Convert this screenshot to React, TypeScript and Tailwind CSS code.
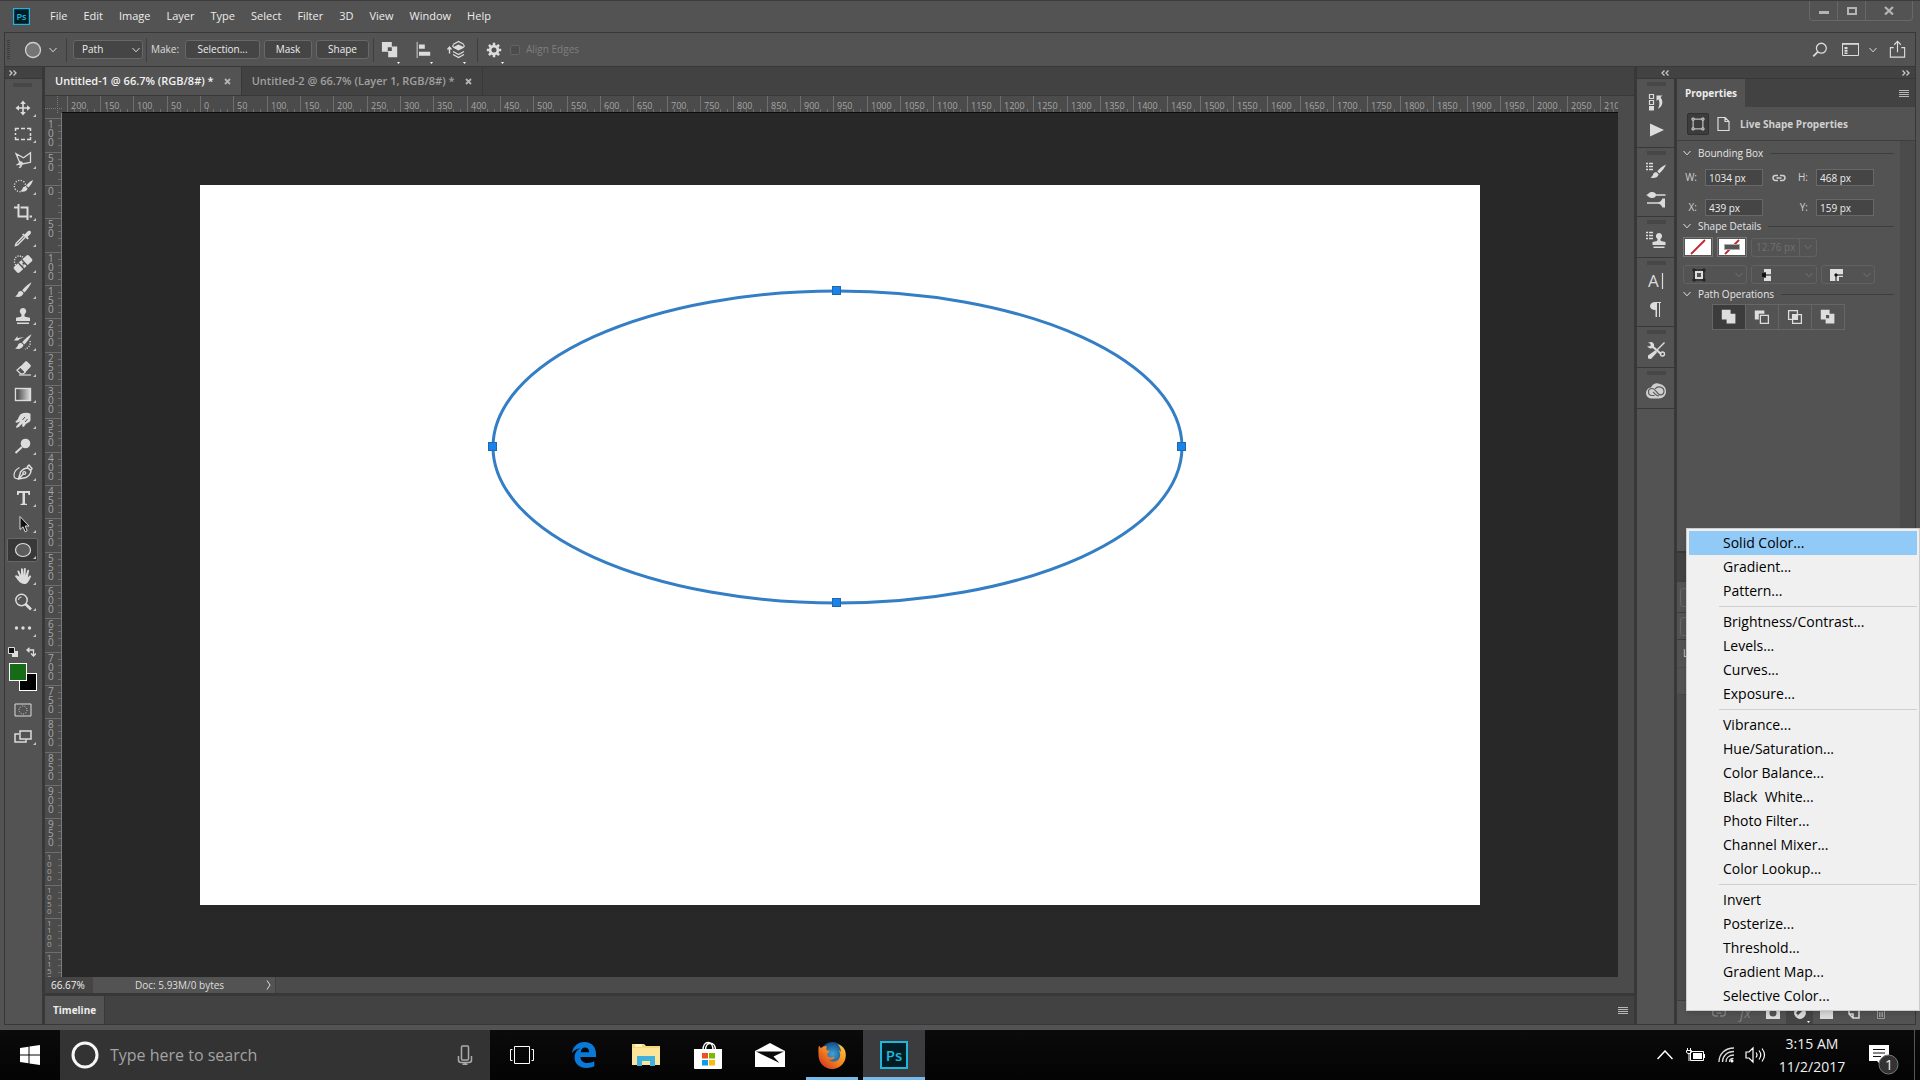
import React from 'react';
import { clsx } from 'clsx';

const menus = ['File', 'Edit', 'Image', 'Layer', 'Type', 'Select', 'Filter', '3D', 'View', 'Window', 'Help'];

const adjustmentGroups = [
  ['Solid Color...', 'Gradient...', 'Pattern...'],
  ['Brightness/Contrast...', 'Levels...', 'Curves...', 'Exposure...'],
  ['Vibrance...', 'Hue/Saturation...', 'Color Balance...', 'Black  White...', 'Photo Filter...', 'Channel Mixer...', 'Color Lookup...'],
  ['Invert', 'Posterize...', 'Threshold...', 'Gradient Map...', 'Selective Color...'],
];

const RULER_STEP = 100 / 3; // 50 document pixels at 66.7%

interface IconProps {
  children: React.ReactNode;
  size?: number;
  className?: string;
}

function Icon({ children, size = 20, className }: IconProps) {
  return (
    <svg
      width={size}
      height={size}
      viewBox="0 0 20 20"
      fill="none"
      stroke="currentColor"
      strokeWidth="1.4"
      aria-hidden="true"
      className={clsx('shrink-0', className)}
    >
      {children}
    </svg>
  );
}

const Solid = ({ d }: { d: string }) => <path d={d} fill="currentColor" fillRule="evenodd" stroke="none" />;

function Chevron({ className }: { className?: string }) {
  return (
    <svg width="8" height="6" viewBox="0 0 8 6" fill="none" stroke="currentColor" aria-hidden="true" className={clsx('shrink-0', className)}>
      <path d="M.5 1 4 4.8 7.5 1" />
    </svg>
  );
}

function DoubleArrow({ left = false }: { left?: boolean }) {
  return (
    <svg width="8" height="6" viewBox="0 0 8 6" fill="none" stroke="#c8c8c8" strokeWidth="1.3" aria-hidden="true">
      {left ? <path d="M3.5.5 1 3l2.5 2.5M7.5.5 5 3l2.5 2.5" /> : <path d="M.5.5 3 3 .5 5.5M4.500.5 7 3 4.500 5.500" />}
    </svg>
  );
}

function Grip() {
  return (
    <svg width="19" height="4" aria-hidden="true" className="shrink-0">
      <path d="M.5 2h19" stroke="#3c3c3c" strokeWidth="4" strokeDasharray="1 1" />
    </svg>
  );
}

function PanelMenuIcon() {
  return (
    <svg width="10" height="7" aria-hidden="true">
      <path d="M0 .5h10M0 2.500h10M0 4.500h10M0 6.500h10" stroke="#b8b8b8" />
    </svg>
  );
}

function PsLogo({ size }: { size: number }) {
  return (
    <svg width={size} height={size} viewBox="0 0 28 28" aria-hidden="true">
      <rect x="1" y="1" width="26" height="26" fill="#001d26" stroke="#1fb5dc" strokeWidth="2" />
      <text x="14" y="19.500" textAnchor="middle" fontSize="15" fontWeight="600" fill="#1fb5dc" className="font-['Open_Sans',sans-serif]">
        Ps
      </text>
    </svg>
  );
}

const BrushShape = () => (
  <>
    <Solid d="M18.500 2.200c-3 1.400-7 5.200-9.300 8.100l2.200 2.100c2.700-2.700 6-7.100 7.100-10.200Z" />
    <Solid d="M8.400 11.100c-1.700-.3-3 .6-3.500 2.200-.4 1.400-1.300 2.300-2.900 3 2.600 1.300 7.300 1 8.600-3.200Z" />
  </>
);

const StampShape = () => <Solid d="M10 2a3.300 3.300 0 0 0-2 5.900c.8.700.8 2-.1 2.900L3 11.800v3.100h14v-3.100l-4.900-1c-.9-.9-.9-2.200-.1-2.900A3.300 3.300 0 0 0 10 2ZM4 16.500h12V18H4Z" />;

const tools: { name: string; icon: React.ReactNode; active?: boolean }[] = [
  {
    name: 'Move',
    icon: (
      <Icon>
        <path d="M10 4v12M4 10h12" strokeWidth="1.600" />
        <Solid d="m10 2.500 2.800 3.500H7.200ZM10 17.500 7.200 14h5.600ZM2.500 10 6 7.200v5.600ZM17.500 10 14 12.800V7.200Z" />
      </Icon>
    ),
  },
  { name: 'Marquee', icon: <Icon><path d="M2.500 7V4.500H6M8 4.500h4M14 4.500h3.500V7M17.500 9v3M17.500 13v2.500H14M12 15.500H8M6 15.500H2.500V13M2.500 11V9" strokeWidth="1.500" /></Icon> },
  {
    name: 'Polygonal Lasso',
    icon: <Icon><path d="M7 13 3 3.700l7.500 4 7-5v9.600L9 14M6.800 12.300c1.800-1 3.800 1.200 1.800 2.400-1.800.9-4-1-1.800-2.400Zm1.500 2.500c.2 1.500-.8 2.500-2.400 2.800M3.500 14.800l5-1.600" strokeWidth="1.300" /></Icon>,
  },
  {
    name: 'Quick Selection',
    icon: (
      <Icon>
        <circle cx="7" cy="10" r="5.700" strokeDasharray="1.200 1.500" />
        <Solid d="M20 4c-2.500 1-5 3.300-6.800 5.600l2 2C17.500 9.500 19.500 6.700 20 4ZM12.500 10.500c-1.700 0-2.600.8-3 2.200-.3 1-1 1.700-2.200 2.200 2.300 1.200 6.200.8 7.300-2.500Z" />
      </Icon>
    ),
  },
  { name: 'Crop', icon: <Icon><path d="M5.500 2v12.500H14M1 5.500h3.500M7.500 5.500h7V18M16.500 14.500H19" strokeWidth="2" /></Icon> },
  {
    name: 'Eyedropper',
    icon: (
      <Icon>
        <path d="m10.500 8-7 7c-.6.700-.7 1.500-1 2.500 1-.2 2-.4 2.500-1l7-7" />
        <Solid d="M9 6.600 10.200 5.400 11.700 6.500 14 4c2.700-3 5.500-.3 3 2.500l-2.500 2.300 1.300 1.400-1.300 1.300Z" />
      </Icon>
    ),
  },
  {
    name: 'Healing Brush',
    icon: (
      <Icon>
        <path d="M8 2.500C4.500.5 1 4 1.500 8c.1 1.300.7 2.300 1.500 3M9 2.500l2 2" strokeDasharray="1.200 1.300" />
        <rect x="0" y="6" width="20" height="8" rx="2" transform="rotate(-42 10 10)" fill="currentColor" stroke="none" />
        <path d="m5.500 9 6 6.500M8.800 5.800l6 6.500" stroke="#535353" />
        <path d="M9.500 9.500h.9v.9M12 10h-.5M9.500 12h.8" stroke="#444" />
      </Icon>
    ),
  },
  { name: 'Brush', icon: <Icon><BrushShape /></Icon> },
  { name: 'Clone Stamp', icon: <Icon><StampShape /></Icon> },
  {
    name: 'History Brush',
    icon: (
      <Icon>
        <BrushShape />
        <Solid d="M1 8.500 4.500 4v2.200c2-.8 4.500-1 6.500-.2C8.500 6 6.500 6.600 5.200 8.500Z" />
        <path d="M17 9c1 3-1 7-5 8" strokeDasharray="1.200 1.300" />
      </Icon>
    ),
  },
  {
    name: 'Eraser',
    icon: (
      <Icon>
        <path d="m4 12.200 3.800 3.700h2.500l2-2L7.500 9Z" strokeWidth="1.300" />
        <Solid d="m7 9 5.500-5.700h1.300l4 4-.2 1.400-5.400 5.700Z" />
        <path d="M6 17h12" strokeWidth="1.200" />
      </Icon>
    ),
  },
  {
    name: 'Gradient',
    icon: (
      <Icon>
        <defs>
          <linearGradient id="toolGradient"><stop offset="0" stopColor="#3a3a3a" /><stop offset="1" stopColor="#e0e0e0" /></linearGradient>
        </defs>
        <rect x="2.500" y="4.500" width="15" height="12" fill="url(#toolGradient)" />
      </Icon>
    ),
  },
  {
    name: 'Smudge',
    icon: (
      <Icon>
        <Solid d="M8 4c3-1.500 7-1.700 9.500-.2v6.700c-1 2.200-2.800 2.300-4 3-1.500.9-1.800 3.500-3.400 3.400-1.300-.2-1-2-.6-3.300-1.700 1-2.600 3.200-4.800 4-1.600.5-2.100-.7-1.200-1.700 1.600-1.600 2.600-2.900 3.700-4.600-1.500.7-3 1.800-4.200 1.300-1-.6-.4-1.600.6-2.100C5.800 9.300 5.500 5.500 8 4Z" />
        <path d="m9.500 10 2.500-3M12 12l2.500-3" stroke="#535353" strokeWidth="1" />
      </Icon>
    ),
  },
  { name: 'Dodge', icon: <Icon><circle cx="12.500" cy="7.500" r="4.800" fill="currentColor" stroke="none" /><path d="m9 11-6.500 6" strokeWidth="2" /></Icon> },
  {
    name: 'Pen',
    icon: (
      <Icon>
        <path d="m5.500 17 2-7c2-2.500 4.500-4 7.500-4l3 3c-.5 3-2.500 5.300-5 6.500Zm0 0 5-5.200M14 5l2-2 3 3.500-1.500 2" strokeWidth="1.500" />
        <circle cx="11.300" cy="11" r="1.400" />
        <path d="M6.500 5.500C3.500 7 1 10 1 13.500c0 2 1.500 3.500 4 3" strokeWidth="1.200" />
      </Icon>
    ),
  },
  { name: 'Type', icon: <Icon><Solid d="M4 3h13v4h-1.500L15 5h-3v10.500l2 .5v1H7.500v-1l2-.5V5H6.200l-.7 2H4Z" /></Icon> },
  { name: 'Path Selection', icon: <Icon><path d="M7 2.500v13l3-2.700 2.200 5 2-1-2-4.800H16Z" fill="#111" strokeWidth="1" /></Icon> },
  { name: 'Ellipse', active: true, icon: <Icon><ellipse cx="10" cy="10" rx="7.500" ry="6.500" fill="#5c5c5c" strokeWidth="1.200" /></Icon> },
  { name: 'Hand', icon: <Icon><Solid d="M6.300 10.500 4.500 5.700c-.3-1.300 1.200-1.800 1.700-.6L8 9V3.200c0-1.400 1.800-1.400 1.900 0L10.200 9l.7-6.200c.2-1.300 1.900-1.100 1.900.2L12.600 9.400l1.700-5c.5-1.200 2-.7 1.700.5l-1.200 6.600 1.600-1.700c.9-.9 2.200 0 1.500 1.100-2 3.600-3 7.100-6.500 7.100-4.500 0-6.200-3.600-9.100-7.200-.8-1.200.6-2.200 1.700-1.300Z" /></Icon> },
  { name: 'Zoom', icon: <Icon><circle cx="8.500" cy="8" r="5.700" strokeWidth="1.500" /><path d="m12.500 12 5.500 5.500" strokeWidth="2.600" /><path d="M5.500 8a3 3 0 0 1 3-3" strokeWidth="1" /></Icon> },
  { name: 'Edit Toolbar', icon: <Icon><circle cx="3.500" cy="10" r="1.700" fill="currentColor" stroke="none" /><circle cx="10" cy="10" r="1.700" fill="currentColor" stroke="none" /><circle cx="16.500" cy="10" r="1.700" fill="currentColor" stroke="none" /></Icon> },
];

function CornerMark() {
  return (
    <svg width="3" height="3" aria-hidden="true" className="absolute right-1 bottom-1">
      <path d="M3 0v3H0Z" fill="#c4c4c4" />
    </svg>
  );
}

function Toolbox() {
  return (
    <div className="flex w-[37px] shrink-0 flex-col">
      <div className="mb-px flex h-[11px] items-center bg-[#424242] px-1">
        <DoubleArrow />
      </div>
      <div className="flex flex-1 flex-col items-center bg-[#535353] pt-1 pr-[2px] text-[#dcdcdc]">
        <Grip />
        <div className="mt-2 flex w-full flex-col">
          {tools.map((tool) => (
            <button key={tool.name} aria-label={tool.name} className="relative flex h-[26px] w-full items-center justify-center">
              <span className={clsx('flex h-6 w-[31px] items-center justify-center rounded-xs', tool.active && 'border border-[#666] bg-[#383838]')}>
                {tool.icon}
              </span>
              <CornerMark />
            </button>
          ))}
        </div>
        <div className="mt-[6px] flex w-full items-center justify-between pr-1 pl-[3px]">
          <svg width="10" height="10" aria-hidden="true">
            <path d="M4 4h6v6H4z" fill="#ddd" />
            <path d="M.5.5h6v6h-6z" fill="#111" stroke="#ddd" />
          </svg>
          <svg width="11" height="10" aria-hidden="true" fill="none" stroke="#ddd" strokeWidth="1.300">
            <path d="M2.500 3h6v5M4.500.7 2 3l2.500 2.300M6 6.500 8.500 9 11 6.500" />
          </svg>
        </div>
        <svg width="30" height="29" aria-label="Foreground and background colors" role="img" className="mt-[5px]">
          <rect x="11.500" y="11.500" width="17" height="17" fill="#000" stroke="#fff" />
          <rect x="1.500" y="1.500" width="17" height="17" fill="#176b17" stroke="#fff" />
        </svg>
        <button aria-label="Quick Mask" className="mt-[6px] flex h-[26px] items-center justify-center">
          <svg width="18" height="14" fill="none" stroke="#dcdcdc" aria-hidden="true">
            <path d="M1 1h16v12H1z" />
            <circle cx="9" cy="7" r="4" strokeDasharray="1 1.500" />
          </svg>
        </button>
        <button aria-label="Screen Mode" className="relative flex h-[26px] w-full items-center justify-center">
          <svg width="18" height="13" fill="none" stroke="#dcdcdc" aria-hidden="true">
            <path d="M5 4H1v8h11V9.500" strokeWidth="1.500" />
            <path d="M6 1h11v8H6z" strokeWidth="1.500" />
          </svg>
          <CornerMark />
        </button>
      </div>
    </div>
  );
}

function TitleBar() {
  return (
    <header className="flex h-8 shrink-0 items-center border-t border-[#3c3c3c] bg-[#535353] pl-[13px]">
      <PsLogo size={17} />
      <nav className="ml-3 flex h-full items-center text-[11px] text-[#ececec]">
        {menus.map((name) => (
          <button key={name} className="h-full px-2">{name}</button>
        ))}
      </nav>
      <div className="mr-[7px] ml-auto flex h-5 self-start rounded-b border border-t-0 border-[#686868] text-[#b4b4b4]">
        <button aria-label="Minimize" className="flex w-7 items-center justify-center border-r border-[#686868] pt-1">
          <svg width="10" height="3" aria-hidden="true"><path d="M0 0h10v3H0z" fill="currentColor" /></svg>
        </button>
        <button aria-label="Restore" className="flex w-7 items-center justify-center border-r border-[#686868]">
          <svg width="10" height="8" aria-hidden="true"><path d="M1 1h8v6H1z" fill="none" stroke="currentColor" strokeWidth="2" /></svg>
        </button>
        <button aria-label="Close" className="flex w-[46px] items-center justify-center">
          <svg width="10" height="9" aria-hidden="true"><path d="m1 1 8 7.500M9 1 1 8.500" stroke="currentColor" strokeWidth="2.200" /></svg>
        </button>
      </div>
    </header>
  );
}

function DropMark() {
  return <Chevron className="pointer-events-none absolute right-[3px] bottom-[6px]" />;
}

function ToolIconButton({ label, children }: { label: string; children: React.ReactNode }) {
  return (
    <button aria-label={label} className="relative flex h-7 w-[33px] items-center justify-center">
      {children}
      <svg width="3" height="2" aria-hidden="true" className="absolute right-[6px] bottom-0"><path d="M0 0h3L1.500 2Z" fill="#fff" /></svg>
    </button>
  );
}

function OptionsBar() {
  const optionButton = 'h-[19px] rounded-[3px] border border-[#686868] bg-[#454545] text-[#ededed]';
  return (
    <div className="flex h-[33px] shrink-0 items-center bg-[#535353] text-[10px] text-[#dcdcdc]">
      <svg width="3" height="19" aria-hidden="true" className="ml-[2px]"><path d="M1.500 0v19" stroke="#3c3c3c" strokeWidth="3" strokeDasharray="1 1" /></svg>
      <svg width="18" height="18" aria-hidden="true" className="ml-[14px]"><circle cx="9" cy="9" r="7.500" fill="#757575" stroke="#d0d0d0" strokeWidth="1.300" /></svg>
      <Chevron className="ml-[7px]" />
      <div className="ml-[9px] h-6 w-px bg-[#3e3e3e]" />
      <div className="relative ml-[6px]">
        <select aria-label="Tool mode" defaultValue="Path" className={clsx(optionButton, 'w-[70px] appearance-none pl-2')}>
          <option>Path</option>
        </select>
        <DropMark />
      </div>
      <div className="ml-[3px] h-6 w-px bg-[#3e3e3e]" />
      <span className="ml-1 w-[34px]">Make:</span>
      <button className={clsx(optionButton, 'w-[75px]')}>Selection...</button>
      <button className={clsx(optionButton, 'ml-1 w-12')}>Mask</button>
      <button className={clsx(optionButton, 'ml-1 w-[53px]')}>Shape</button>
      <div className="ml-1 h-6 w-px bg-[#3e3e3e]" />
      <div className="-ml-px flex">
        <ToolIconButton label="Path operations">
          <Icon size={18}><Solid d="M1 1h11v5h6v12H8v-6H1Zm6.500 6v4H12V7Z" /></Icon>
        </ToolIconButton>
        <ToolIconButton label="Path alignment">
          <Icon size={18}><path d="M3.500 1v18" strokeWidth="1" /><Solid d="M5.500 4H12v4.500H5.500ZM5.500 12H18v4.500H5.500Z" /></Icon>
        </ToolIconButton>
        <ToolIconButton label="Path arrangement">
          <Icon size={20}>
            <path d="M3.500 13.500V7.500M1.500 9.500l2-2.500 2 2.500" />
            <Solid d="m12.500 4.500 6 3-6 3-6-3Z" />
            <path d="m7 4.500 5.500-3 5.500 3M7 5v2M18 5v2M7 11.500l5.500 3 5.500-3M7 14.500l5.500 3 5.500-3" strokeWidth="1.300" />
          </Icon>
        </ToolIconButton>
      </div>
      <div className="ml-[5px] h-6 w-px bg-[#3e3e3e]" />
      <div className="-ml-px">
        <ToolIconButton label="Path options">
          <Icon size={18}>
            <circle cx="10" cy="10" r="4.300" strokeWidth="3" />
            <path d="M10 2v3M10 15v3M2 10h3M15 10h3M4.400 4.400l2 2M13.600 13.600l2 2M4.400 15.600l2-2M13.600 6.400l2-2" strokeWidth="2.800" />
          </Icon>
        </ToolIconButton>
      </div>
      <label className="flex items-center gap-[6px] text-[#7e7e7e]">
        <input type="checkbox" disabled className="size-[10px] appearance-none rounded-xs border border-[#646464] bg-[#4c4c4c]" />
        Align Edges
      </label>
      <div className="mr-2 ml-auto flex items-center">
        <button aria-label="Search">
          <Icon size={18}><circle cx="11.500" cy="8" r="5.500" /><path d="m7.500 12-5 5" strokeWidth="2" /></Icon>
        </button>
        <button aria-label="Workspace" className="ml-[13px] flex items-center gap-[10px]">
          <svg width="17" height="13" fill="none" stroke="currentColor" aria-hidden="true">
            <path d="M.5 1h16v11.500H.5z" /><path d="M0 .8h17" strokeWidth="1.500" />
            <path d="M4 4v7" strokeWidth="3" strokeDasharray="2 .7" />
          </svg>
          <Chevron />
        </button>
        <button aria-label="Share" className="ml-[11px]">
          <Icon size={19}><path d="M6 8H2.500v10h15V8H14M10 13V2M6.500 5 10 1.500 13.500 5" strokeWidth="1.200" /></Icon>
        </button>
      </div>
    </div>
  );
}

function HorizontalRuler() {
  const origin = 138;
  const majors = Array.from({ length: 47 }, (_, i) => i - 4);
  return (
    <svg width="100%" height="17" fontSize="9" className="block bg-[#4b4b4b]">
      {majors.map((n) => {
        const x = Math.round(origin + n * RULER_STEP);
        return (
          <g key={n}>
            <path d={`M${x + 0.5} 0v16`} stroke="#6e6e6e" />
            {[1, 2, 3, 4].map((m) => (
              <path key={m} d={`M${Math.round(x + (m * RULER_STEP) / 5) + 0.5} 13v3`} stroke="#6e6e6e" />
            ))}
            {n <= 42 && <text x={x + 4} y="13" fill="#a6a6a6">{Math.abs(n * 50)}</text>}
          </g>
        );
      })}
      <path d="M0 16.500h4000" stroke="#0c0c0c" />
    </svg>
  );
}

function VerticalRuler() {
  const origin = 72;
  const majors = Array.from({ length: 26 }, (_, i) => i - 2);
  return (
    <svg width="17" height="100%" className="block shrink-0 bg-[#4b4b4b]">
      {majors.map((n) => {
        const y = Math.round(origin + n * RULER_STEP);
        const digits = String(Math.abs(n * 50)).split('');
        const small = digits.length > 3;
        return (
          <g key={n} fill="#a6a6a6">
            <path d={`M0 ${y + 0.5}h17`} stroke="#6e6e6e" />
            {[1, 2, 3, 4].map((m) => (
              <path key={m} d={`M13 ${Math.round(y + (m * RULER_STEP) / 5) + 0.5}h3`} stroke="#6e6e6e" />
            ))}
            <text y={y + (small ? 1 : 1)} fontSize={small ? 8 : 10}>
              {digits.map((digit, i) => (
                <tspan key={i} x={small ? 2 : 3} dy={small ? 7 : 9}>{digit}</tspan>
              ))}
            </text>
          </g>
        );
      })}
      <path d="M16.500 0v4000" stroke="#7a7a7a" />
    </svg>
  );
}

function Artboard() {
  return (
    <svg width="1280" height="720" role="img" aria-label="Ellipse path" className="shrink-0 bg-white">
      <ellipse cx="637.500" cy="262" rx="344.500" ry="156" fill="none" stroke="#337ec4" strokeWidth="3" />
      {[[637, 106], [293, 262], [982, 262], [637, 418]].map(([x, y]) => (
        <rect key={`${x}-${y}`} x={x - 4.5} y={y - 4.5} width="8" height="8" fill="#1783ee" stroke="#2367a5" />
      ))}
    </svg>
  );
}

function DocumentArea() {
  return (
    <main className="flex min-w-0 flex-1 flex-col">
      <div className="mb-px flex h-7 shrink-0 bg-[#424242] text-[11px] font-semibold">
        <div className="flex items-center gap-[10px] border-r border-[#383838] bg-[#535353] px-[10px] pt-px text-[#f2f2f2]">
          <button>Untitled-1 @ 66.7% (RGB/8#) *</button>
          <button aria-label="Close Untitled-1"><CloseMark /></button>
        </div>
        <div className="flex items-center gap-[10px] border-r border-[#383838] px-[10px] pt-px text-[#a0a0a0]">
          <button>Untitled-2 @ 66.7% (Layer 1, RGB/8#) *</button>
          <button aria-label="Close Untitled-2"><CloseMark /></button>
        </div>
      </div>
      <div className="flex min-h-0 flex-1">
        <div className="flex min-w-0 flex-1 flex-col">
          <div className="flex shrink-0">
            <svg width="17" height="17" aria-hidden="true" className="shrink-0 bg-[#4b4b4b]">
              <path d="M12.500 0v17M0 12.500h17" stroke="#7a7a7a" strokeDasharray="1 1" />
            </svg>
            <div className="min-w-0 flex-1"><HorizontalRuler /></div>
          </div>
          <div className="flex min-h-0 flex-1">
            <VerticalRuler />
            <div className="flex min-w-0 flex-1 items-center justify-center overflow-hidden bg-[#282828]">
              <Artboard />
            </div>
          </div>
        </div>
        <div className="w-4 shrink-0 bg-[#4b4b4b]" />
      </div>
      <div className="flex h-4 shrink-0 bg-[#4b4b4b] text-[10px] leading-4 text-[#dedede]">
        <input aria-label="Zoom level" defaultValue="66.67%" className="w-12 bg-[#454545] pl-[6px] text-[#f0f0f0] outline-none" />
        <button className="flex w-[183px] items-center justify-between border-r border-[#414141] bg-[#535353] pr-1 pl-[42px]">
          Doc: 5.93M/0 bytes
          <svg width="5" height="10" fill="none" stroke="currentColor" aria-hidden="true"><path d="m1 .5 3 4.500-3 4.500" /></svg>
        </button>
      </div>
      <div className="mt-[3px] flex h-7 shrink-0 items-center justify-between bg-[#424242] pr-[6px] text-[10px]">
        <button className="h-full border-r border-[#383838] bg-[#535353] px-2 font-bold text-[#ededed]">Timeline</button>
        <button aria-label="Timeline menu"><PanelMenuIcon /></button>
      </div>
    </main>
  );
}

function CloseMark() {
  return (
    <svg width="7" height="7" aria-hidden="true"><path d="m1 1 5 5M6 1 1 6" stroke="#b4b4b4" strokeWidth="1.800" /></svg>
  );
}

const ListDots = () => <path d="M0 2.500h2M3 2.500h4M0 5.500h2M3 5.500h4M0 8.500h2M3 8.500h4" strokeWidth="1.300" />;

const dockGroups: { name: string; icon: React.ReactNode }[][] = [
  [
    {
      name: 'History',
      icon: <Icon><path d="M3.500 2.500h4v4h-4zM3.500 8.500h4v4h-4z" strokeWidth="1.200" /><Solid d="M3 14h5v4.500H3ZM10.500 3.500h6l-2 1.800c3 3.500 2.500 9-2.500 11.500 1.700-3.500 2-7 .3-9.600L10.500 9Z" /></Icon>,
    },
    { name: 'Actions', icon: <Icon><Solid d="m4 3.500 14 6.500L4 16.500Z" /></Icon> },
  ],
  [
    {
      name: 'Brush Presets',
      icon: <Icon><ListDots /><Solid d="M20 3.500c-3 1.200-6.500 4.200-8.700 6.800l2 2.200c2.700-2.500 5.700-6 6.700-9ZM10.500 11.300c-2.500-.3-3 1-3.500 2.500-.4 1.200-1.200 2-2.500 2.700 2.600 1.200 7.200.7 8.200-3.200Z" /></Icon>,
    },
    {
      name: 'Brush Settings',
      icon: <Icon><path d="M8 6h11.500M1 14h12" strokeWidth="1.600" /><Solid d="M0 6c2-.3 3-3 6-3 3 0 4 1.500 4 3s-1 3-4 3S2 6.500 0 6ZM12 14c1-1 3.500-1.500 4.500-4.500h2.500v9h-2.500c-1-3-3.500-3.500-4.500-4.500Z" /></Icon>,
    },
  ],
  [
    {
      name: 'Clone Source',
      icon: <Icon><ListDots /><Solid d="M13 3a3.200 3.200 0 0 0-2 5.600c.8.700.8 1.400 0 2.300l-4.500 1V15h13v-3.100l-4.500-1c-.8-.9-.8-1.600 0-2.300A3.200 3.200 0 0 0 13 3ZM7.500 16.500h11V18h-11Z" /></Icon>,
    },
  ],
  [
    { name: 'Character', icon: <Icon><text x="2" y="16" fontSize="17" fill="currentColor" stroke="none">A</text><path d="M16.500 2v16" strokeWidth="1.200" /></Icon> },
    { name: 'Paragraph', icon: <Icon><Solid d="M9.500 11C2 11 2.500 3 9.500 3H15v1h-1v14h-1V4h-2v14H9.500Z" /></Icon> },
  ],
  [
    {
      name: 'Tool Presets',
      icon: <Icon><path d="m6 6 9 8" strokeWidth="2.200" /><path d="M18.500 2.500 9 12" strokeWidth="1.400" /><circle cx="16.500" cy="14" r="2" /><Solid d="M2 2.500 6 2l2 2v4L4 8.500 1 6.500l3.500-.5V4ZM9 10.500l2 2-6 6.500-3-.5v-3Z" /></Icon>,
    },
  ],
  [
    {
      name: 'Libraries',
      icon: (
        <svg width="22" height="18" viewBox="0 0 22 18" fill="none" aria-hidden="true">
          <path d="M7 16.500a5.500 5.500 0 0 1-1-11C8 1 12 .5 15 2c4 1 6 4 6 7.500 0 4-3 7-7 7Z" fill="#cfcfcf" />
          <path d="M9.500 13.500H7a3.500 3.500 0 0 1 0-7c3 0 4.500 3.500 6.500 5.500 2 2 5.500.5 5.500-2.500 0-4.500-6-6.500-9-2.500M8 10c2 1.500 3 4 6 4" stroke="#5c5c5c" strokeWidth="1.200" />
        </svg>
      ),
    },
  ],
];

function IconDock() {
  return (
    <div className="flex w-[37px] flex-col bg-[#535353] text-[#dcdcdc]">
      {dockGroups.map((group, i) => (
        <div key={i} className="flex flex-col items-center border-b border-[#383838] pt-[3px] pb-[3px] pl-px">
          <Grip />
          <div className="mt-[2px] flex flex-col">
            {group.map((item) => (
              <button key={item.name} aria-label={item.name} className="flex h-7 items-center justify-center">{item.icon}</button>
            ))}
          </div>
        </div>
      ))}
    </div>
  );
}

function SectionTitle({ children }: { children: string }) {
  return (
    <h3 className="flex h-5 items-center gap-[7px] pr-[6px] pl-[6px] text-[#e6e6e6]">
      <Chevron />
      {children}
      <span className="h-px flex-1 bg-[#3e3e3e]" />
    </h3>
  );
}

function Field({ label, value }: { label: string; value: string }) {
  return (
    <label className="flex items-center">
      <span className="w-[17px] pr-1 text-right">{label}</span>
      <input defaultValue={value} className="ml-1 h-[17px] w-[58px] border border-[#686868] bg-[#454545] px-[3px] text-[#ededed] outline-none" />
    </label>
  );
}

function DisabledPicker({ label, width, children }: { label: string; width: string; children: React.ReactNode }) {
  return (
    <button aria-label={label} className={clsx('flex h-[19px] items-center justify-between rounded-[3px] border border-[#626262] pr-[3px] pl-2', width)}>
      {children}
      <Chevron className="text-[#707070]" />
    </button>
  );
}

function PropertiesPanel() {
  const opButton = 'flex h-6 w-[33px] items-center justify-center border-r border-[#666]';
  return (
    <section className="flex h-[472px] shrink-0 flex-col bg-[#535353] text-[10px] text-[#d0d0d0]">
      <div className="flex h-7 items-center justify-between bg-[#424242] pr-[6px]">
        <h2 className="flex h-full items-center bg-[#535353] px-2 font-bold text-[#ededed]">Properties</h2>
        <button aria-label="Panel menu"><PanelMenuIcon /></button>
      </div>
      <div className="flex h-[34px] items-center border-b border-[#3e3e3e] pl-[10px]">
        <button aria-label="Live shape" className="flex size-[22px] items-center justify-center rounded-xs border border-[#303030] bg-[#3c3c3c] text-[#ddd]">
          <Icon size={14}>
            <path d="M5 3h10M5 17h10M3 5v10M17 5v10M1.500 1.500h3v3h-3zM15.500 1.500h3v3h-3zM1.500 15.500h3v3h-3zM15.500 15.500h3v3h-3z" />
          </Icon>
        </button>
        <button aria-label="Masks" className="ml-2 text-[#ddd]">
          <svg width="13" height="14" fill="none" stroke="currentColor" aria-hidden="true"><path d="M1 .5h7l4 4v9H1zM8 .5v4h4" strokeWidth="1.200" /></svg>
        </button>
        <h3 className="ml-[10px] pt-px font-bold">Live Shape Properties</h3>
      </div>
      <div className="flex flex-1">
        <div className="flex flex-1 flex-col pt-[2px]">
          <SectionTitle>Bounding Box</SectionTitle>
          <div className="mt-[6px] flex items-center pl-[7px]">
            <Field label="W:" value="1034 px" />
            <svg width="14" height="8" fill="none" stroke="currentColor" strokeWidth="1.500" aria-label="Linked" className="mx-[9px]">
              <path d="M6 1.500H3.500a2.500 2.500 0 0 0 0 5H6M8 1.500h2.500a2.500 2.500 0 0 1 0 5H8M4.500 4h5" />
            </svg>
            <Field label="H:" value="468 px" />
          </div>
          <div className="mt-[13px] flex items-center gap-8 pl-[7px]">
            <Field label="X:" value="439 px" />
            <Field label="Y:" value="159 px" />
          </div>
          <SectionTitle>Shape Details</SectionTitle>
          <div className="mt-px flex items-center gap-1 pl-[6px]">
            <button aria-label="Fill" className="border border-[#777] p-px">
              <svg width="26" height="16" className="bg-white" aria-hidden="true"><path d="m6 15 14-14" stroke="#c1272d" strokeWidth="1.800" /></svg>
            </button>
            <button aria-label="Stroke" className="border border-[#777] p-px">
              <svg width="26" height="16" className="bg-white" aria-hidden="true">
                <path d="m6 15 14-14" stroke="#c1272d" strokeWidth="1.800" />
                <path d="M5.500 5.500h15v5h-15z" fill="#555" stroke="#aaa" />
              </svg>
            </button>
            <div className="flex h-[19px] items-center rounded-[3px] border border-[#626262] pr-1 text-[#707070]">
              <input aria-label="Stroke width" disabled defaultValue="12.76 px" className="mr-1 h-full w-12 border-r border-[#626262] pl-1" />
              <Chevron />
            </div>
          </div>
          <div className="mt-2 flex gap-1 pl-[6px]">
            <DisabledPicker label="Stroke alignment" width="w-16">
              <svg width="14" height="14" aria-hidden="true" fill="none">
                <path d="M4 4h6v6H4z" stroke="#ddd" strokeWidth="2" />
                <path d="M1 1h2v2H1zM11 1h2v2h-2zM1 11h2v2H1zM11 11h2v2h-2zM3 2h8M3 12h8M2 3v8M12 3v8" stroke="#1a1a1a" />
              </svg>
            </DisabledPicker>
            <DisabledPicker label="Stroke caps" width="w-[66px]">
              <svg width="14" height="12" aria-hidden="true"><path d="M4 0h7v12H4V9h2V3H4Z" fill="#ddd" /><path d="M2.500 4.500h3v3h-3zM5 6h6" stroke="#111" fill="#111" /></svg>
            </DisabledPicker>
            <DisabledPicker label="Stroke corners" width="w-[54px]">
              <svg width="14" height="12" aria-hidden="true"><path d="M0 0h13v8H9v4H0Z" fill="#ddd" /><path d="M5 5h2v2H5zM6 6h7M6 6v6" stroke="#111" fill="#111" /></svg>
            </DisabledPicker>
          </div>
          <SectionTitle>Path Operations</SectionTitle>
          <div className="ml-[35px] flex self-start border border-r-0 border-[#666] text-[#ddd]">
            <button aria-label="Unite" className={clsx(opButton, 'bg-[#3c3c3c]')}>
              <Icon size={16}><Solid d="M1 1h11v5h6v12H7v-5H1Z" /></Icon>
            </button>
            <button aria-label="Subtract" className={opButton}>
              <Icon size={16}><Solid d="M1 2h12v4H6v7H1Z" /><path d="M8 8h10v10H8z" strokeWidth="1.600" /></Icon>
            </button>
            <button aria-label="Intersect" className={opButton}>
              <Icon size={16}><path d="M2 2h11v11H2zM7 7h11v11H7z" strokeWidth="1.600" /><Solid d="M7 7h6v6H7z" /></Icon>
            </button>
            <button aria-label="Exclude" className={opButton}>
              <Icon size={16}><Solid d="M1 1h11v5h6v12H7v-5H1Zm6.500 6.500v4h4v-4Z" /></Icon>
            </button>
          </div>
        </div>
        <div className="w-[15px] bg-[#4b4b4b]" />
      </div>
    </section>
  );
}

function LayersPanel() {
  return (
    <section aria-label="Layers" className="mt-[2px] flex flex-1 flex-col bg-[#4b4b4b] text-[10px] text-[#c8c8c8]">
      <div className="h-7 bg-[#424242]" />
      <div className="flex h-8 items-center border-y border-[#3e3e3e] bg-[#535353] px-[3px]">
        <div className="h-[19px] w-16 rounded-[3px] border border-[#666]" />
      </div>
      <div className="flex h-[27px] items-center border-b border-[#3e3e3e] bg-[#535353] px-[3px]">
        <div className="h-[19px] w-16 rounded-[3px] border border-[#666]" />
      </div>
      <div className="flex h-7 items-center border-b border-[#4b4b4b] bg-[#535353] px-[6px]">Lock:</div>
      <div className="h-[27px] border-b border-[#464646] bg-[#535353]" />
      <div className="mt-auto flex h-6 items-center border-t border-[#3e3e3e] bg-[#535353] pl-7 text-[#dcdcdc]">
        <button aria-label="Link layers" className="flex h-full w-[27px] items-center justify-center text-[#808080]">
          <svg width="14" height="8" fill="none" stroke="currentColor" strokeWidth="1.500" aria-hidden="true"><path d="M6 1H3.500a2.500 2.500 0 0 0 0 6H6M8 1h2.500a2.500 2.500 0 0 1 0 6H8M4.500 4h5" /></svg>
        </button>
        <button aria-label="Layer style" className="flex h-full w-[27px] items-center justify-center text-sm text-[#808080] italic">fx</button>
        <button aria-label="Add mask" className="flex h-full w-[27px] items-center justify-center">
          <svg width="14" height="12" aria-hidden="true"><path d="M0 0h14v12H0z" fill="currentColor" /><circle cx="7" cy="6" r="3.500" fill="#535353" /></svg>
        </button>
        <button aria-label="New fill or adjustment layer" className="relative flex h-full w-[27px] items-center justify-center bg-[#454545]">
          <svg width="12" height="12" aria-hidden="true"><circle cx="6" cy="6" r="5.300" fill="none" stroke="currentColor" /><path d="M10 2A5.500 5.500 0 0 1 2 10Z" fill="currentColor" /><path d="M2 10A5.500 5.500 0 0 1 10 2Z" fill="currentColor" /><path d="m3 7 4-4" stroke="#454545" strokeWidth="3" /></svg>
          <svg width="3" height="2" aria-hidden="true" className="absolute right-[3px] bottom-px"><path d="M0 0h3L1.500 2Z" fill="#fff" /></svg>
        </button>
        <button aria-label="New group" className="flex h-full w-[27px] items-center justify-center">
          <svg width="13" height="12" aria-hidden="true"><path d="M0 1h5l1 2h7v9H0z" fill="currentColor" /></svg>
        </button>
        <button aria-label="New layer" className="flex h-full w-[27px] items-center justify-center">
          <svg width="12" height="12" fill="none" stroke="currentColor" strokeWidth="1.500" aria-hidden="true"><path d="M1 1h10v10H5L1 7ZM1 7h4v4" /></svg>
        </button>
        <button aria-label="Delete layer" className="flex h-full w-[27px] items-center justify-center text-[#999]">
          <svg width="10" height="12" fill="none" stroke="currentColor" aria-hidden="true"><path d="M0 2.500h10M3.500 2.500v-2h3v2M1.500 3v8.500h7V3M3.500 5v5M5 5v5M6.500 5v5" /></svg>
        </button>
      </div>
    </section>
  );
}

function AdjustmentMenu() {
  return (
    <div role="menu" className="absolute right-0 bottom-[19px] w-[234px] border border-[#ccc] bg-[#f0f0f0] p-[2px] text-sm text-black shadow-md">
      {adjustmentGroups.map((group, g) => (
        <div key={g} className={clsx('flex flex-col', g > 0 && 'relative mt-[3px] pt-1')}>
          {g > 0 && <hr className="absolute top-0 right-0 left-[30px] border-[#cfcfcf]" />}
          {group.map((item, i) => (
            <button
              key={item}
              role="menuitem"
              className={clsx('h-6 pl-[34px] text-left leading-6 whitespace-pre', g === 0 && i === 0 && 'bg-[#91c9f7]')}
            >
              {item}
            </button>
          ))}
        </div>
      ))}
    </div>
  );
}

const taskApps: { name: string; icon: React.ReactNode; running?: boolean; active?: boolean }[] = [
  { name: 'Task View', icon: <svg width="24" height="20" fill="none" stroke="#fff" aria-hidden="true"><path d="M4.500 1.500h15v17h-15zM2.500 4.500h-2v11h2M21.500 4.500h2v11h-2" /></svg> },
  {
    name: 'Edge',
    icon: (
      <svg width="26" height="28" viewBox="0 0 26 28" aria-hidden="true">
        <path d="M1 12C2 5 7 1 13.500 1 21 1 25 6.500 25 13v3H9.500c0 4 3.500 6 7 6 2.700 0 4.800-.6 6.800-1.700v5C21 26.600 18.500 27 15.500 27 8.500 27 3.500 22.500 3.500 16.500c0-4 2-7.500 5.800-9.200C5.800 7.700 3 9.500 1 12Zm8.700-.8h8.500c0-3-1.700-4.700-4.200-4.700-2.400 0-4 1.900-4.300 4.700Z" fill="#0a7ad8" />
      </svg>
    ),
  },
  {
    name: 'File Explorer',
    icon: (
      <svg width="28" height="24" viewBox="0 0 28 24" aria-hidden="true">
        <path d="M0 1h12l2 2h14v19H0z" fill="#f8d775" /><path d="M3 1h7v3H3z" fill="#fff2c6" /><path d="M0 5h28v17H0z" fill="#fbe59b" />
        <path d="M5 13h18v10h-5v-5h-8v5H5z" fill="#3fb1dc" />
      </svg>
    ),
  },
  {
    name: 'Store',
    icon: (
      <svg width="30" height="30" viewBox="0 0 30 30" aria-hidden="true">
        <path d="M10 10c0-10 10-10 10 0M12.500 10c0-9 10-9 10 0" fill="none" stroke="#fff" strokeWidth="1.500" />
        <path d="M1 9h28v19q0 1-1 1H2q-1 0-1-1z" fill="#fff" />
        <path d="M9 13h6v5.500H9z" fill="#f04e23" /><path d="M16 13h6v5.500h-6z" fill="#7eb900" /><path d="M9 20h6v5.500H9z" fill="#0d9ee8" /><path d="M16 20h6v5.500h-6z" fill="#fdb813" />
      </svg>
    ),
  },
  {
    name: 'Mail',
    icon: <svg width="30" height="24" viewBox="0 0 30 24" aria-hidden="true"><path d="M0 8 15 0l15 8v16H0Z" fill="#fff" /><path d="M1 8.500h28l-10.500 5 6 6.500Z" fill="#0a0a0a" /></svg>,
  },
  {
    name: 'Firefox',
    running: true,
    icon: (
      <svg width="28" height="28" viewBox="0 0 28 28" aria-hidden="true">
        <defs>
          <linearGradient id="foxBody" x1="1" y1="0" x2="0" y2="1"><stop offset="0" stopColor="#ffd33d" /><stop offset=".5" stopColor="#f58220" /><stop offset="1" stopColor="#c8281e" /></linearGradient>
          <radialGradient id="foxGlobe"><stop offset="0" stopColor="#3fa4d8" /><stop offset="1" stopColor="#154a86" /></radialGradient>
        </defs>
        <circle cx="14.500" cy="13" r="12" fill="url(#foxGlobe)" />
        <path d="M1 4.500c.5 1 1 1.800 2 2.500C5 5 7 5 9 5.500 8 7 8 8 9 9.500l3 .5-2.500 2.500c-.8 2 .5 3.500 2.500 4 2 .3 3-.8 4.500-.3-1 2.300-3.500 3-5.500 2.500 4 3.500 10 1.800 11-3.500.5-3-.5-4.500-1-6 1 .5 1.500 1 2 2 0-3.500-1.500-6-3.500-8C26 5 28 9.500 27.800 14.500 27.500 22.500 21.500 28 14 28 6 28 .5 21.500.5 14 .5 10 0 8 1 4.500Z" fill="url(#foxBody)" />
      </svg>
    ),
  },
  { name: 'Photoshop', running: true, active: true, icon: <PsLogo size={28} /> },
];

function Taskbar() {
  return (
    <footer className="flex h-[50px] shrink-0 bg-linear-to-b from-[#0b0b0c] to-[#040405] text-[#f0f0f0]">
      <button aria-label="Start" className="flex w-[60px] items-center justify-center">
        <svg width="20" height="20" viewBox="0 0 20 20" fill="#fff" aria-hidden="true"><path d="M0 3 8.500 1.800v7.700H0ZM9.500 1.600 20 0v9.500H9.500ZM0 10.500h8.500v7.700L0 17ZM9.500 10.500H20V20L9.500 18.400Z" /></svg>
      </button>
      <label className="flex w-[430px] items-center bg-[#333] px-[11px]">
        <svg width="28" height="28" aria-hidden="true" className="shrink-0"><circle cx="14" cy="14" r="12" fill="none" stroke="#f6f6f6" strokeWidth="3" /></svg>
        <input aria-label="Search" placeholder="Type here to search" className="ml-[11px] min-w-0 flex-1 text-base outline-none placeholder:text-[#a3a3a3]" />
        <svg width="16" height="20" fill="none" stroke="#aaa" strokeWidth="1.500" aria-hidden="true" className="mr-[6px]"><rect x="4.500" y="1" width="7" height="14" rx="1" /><path d="M1.500 11v4q0 2.500 2.500 2.500h8q2.500 0 2.500-2.500v-4M8 17v2M5.500 19.200h5" /></svg>
      </label>
      <nav className="ml-px flex">
        {taskApps.map((app) => (
          <button
            key={app.name}
            aria-label={app.name}
            className={clsx('relative flex w-[62px] items-center justify-center', app.active && 'bg-[#3c3c3e]')}
          >
            {app.icon}
            {app.running && <span className={clsx('absolute bottom-0 h-[3px] bg-[#76b9ed]', app.active ? 'inset-x-0' : 'inset-x-[5px]')} />}
          </button>
        ))}
      </nav>
      <div className="ml-auto flex items-center">
        <button aria-label="Hidden icons"><svg width="16" height="10" fill="none" stroke="#fff" strokeWidth="1.500" aria-hidden="true"><path d="m.5 9 7.500-8 7.500 8" /></svg></button>
        <svg width="20" height="14" fill="none" stroke="#fff" aria-label="Battery" className="ml-[13px]">
          <path d="M4.500 3.500h13v9h-13zM18.500 6v4" /><path d="M7 5h9v6H7z" fill="#fff" stroke="none" />
          <path d="M1.500 0v2M4.500 0v2M.5 2.500h5v2l-1.500 1H2l-1.500-1zM3 5v8" />
        </svg>
        <svg width="17" height="16" fill="none" stroke="#ddd" strokeWidth="1.300" aria-label="Network" className="ml-3">
          <path d="M1 15C1 7 7 1 16 1M4.500 15C4.500 9 9 4.500 16 4.500M8 15c0-4 3-7 8-7M11.500 15c0-2 1.500-3.500 4-3.500" /><circle cx="14" cy="14" r="1.500" fill="#fff" stroke="none" />
        </svg>
        <svg width="21" height="18" fill="none" stroke="#fff" strokeWidth="1.200" aria-label="Volume" className="ml-[10px]">
          <path d="M1 6h3l4-4v14l-4-4H1zM11 6.500q2 2.500 0 5M14 4.500q3.500 4.500 0 9M17 2.500q5 6.500 0 13" />
        </svg>
        <div className="ml-[10px] flex w-[72px] flex-col items-center text-sm leading-[23px]">
          <span>3:15 AM</span>
          <span>11/2/2017</span>
        </div>
        <button aria-label="Notifications" className="relative mt-[10px] ml-[21px] h-[30px] w-[30px]">
          <svg width="30" height="30" viewBox="0 0 30 30" aria-hidden="true">
            <path d="M0 0h20v16h-7v5l-5-5H0Z" fill="#fff" /><path d="M4 4.500h12M4 8h12M4 11.500h8" stroke="#111" />
            <circle cx="19.500" cy="19.500" r="9.500" fill="#333" stroke="#777" />
          </svg>
          <span className="absolute right-[6px] bottom-0 text-sm leading-5">1</span>
        </button>
        <div className="mr-[5px] ml-[15px] h-[50px] w-px bg-[#555]" />
      </div>
    </footer>
  );
}

export default function App() {
  return (
    <div className="flex h-screen flex-col overflow-hidden bg-[#535353] font-['Open_Sans','Noto_Sans',sans-serif]">
      <div className="relative flex min-h-0 flex-1 flex-col">
        <TitleBar />
        <div className="mx-1 mb-[5px] flex min-h-0 flex-1 flex-col gap-px border border-[#383838] bg-[#383838]">
          <OptionsBar />
          <div className="flex min-h-0 flex-1">
            <Toolbox />
            <div className="w-[3px] shrink-0" />
            <DocumentArea />
            <div className="ml-[3px] flex w-[278px] shrink-0 flex-col">
              <div className="mb-px flex h-[11px] shrink-0 items-center bg-[#424242] pr-[5px]">
                <div className="flex w-8 justify-end"><DoubleArrow left /></div>
                <div className="ml-auto"><DoubleArrow /></div>
              </div>
              <div className="flex min-h-0 flex-1 gap-[3px]">
                <IconDock />
                <div className="flex min-w-0 flex-1 flex-col">
                  <PropertiesPanel />
                  <LayersPanel />
                </div>
              </div>
            </div>
          </div>
        </div>
        <AdjustmentMenu />
      </div>
      <Taskbar />
    </div>
  );
}
